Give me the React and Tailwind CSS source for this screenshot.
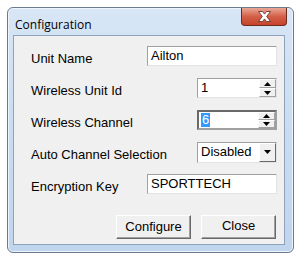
import React from "react";

const FONT = { fontFamily: '"Liberation Sans", Arial, sans-serif' };

// Flèches des boutons de défilement
const UpArrow = () => (
  <svg width="7" height="4" viewBox="0 0 7 4">
    <path d="M3.5 0L7 4H0z" fill="#000" />
  </svg>
);
const DownArrow = () => (
  <svg width="7" height="4" viewBox="0 0 7 4">
    <path d="M0 0h7L3.5 4z" fill="#000" />
  </svg>
);

const TextBox = ({ value, className = "" }) => (
  <div
    className={`h-[20px] bg-white border border-t-[#a0a0a0] border-l-[#a0a0a0] border-b-[#e3e3e3] border-r-[#e3e3e3] flex items-center pl-[3px] text-[13px] text-black ${className}`}
  >
    {value}
  </div>
);

const SpinHalf = ({ children }) => (
  <div className="flex-1 flex items-center justify-center bg-[#f0f0f0] border border-t-white border-l-white border-b-[#a0a0a0] border-r-[#a0a0a0]">
    {children}
  </div>
);

const Spinner = ({ value, focused }) => (
  <div
    className={`w-[80px] h-[20px] bg-white flex ${
      focused
        ? "border-2 border-t-[#696969] border-l-[#696969] border-b-[#a0a0a0] border-r-[#a0a0a0]"
        : "border border-t-[#a0a0a0] border-l-[#a0a0a0] border-b-[#e3e3e3] border-r-[#e3e3e3]"
    }`}
  >
    <div className="flex-1 flex items-center pl-[2px] text-[13px]">
      {focused ? (
        <span className="bg-[#3399ff] text-white px-[1px] leading-[14px]">{value}</span>
      ) : (
        <span className="pl-[1px]">{value}</span>
      )}
    </div>
    <div className="w-[17px] flex flex-col">
      <SpinHalf><UpArrow /></SpinHalf>
      <SpinHalf><DownArrow /></SpinHalf>
    </div>
  </div>
);

const Dropdown = ({ value }) => (
  <div className="w-[80px] h-[21px] bg-white flex border border-t-[#a0a0a0] border-l-[#a0a0a0] border-b-[#e3e3e3] border-r-[#e3e3e3]">
    <div className="flex-1 flex items-center pl-[3px] text-[13px]">{value}</div>
    <div className="w-[17px] flex items-center justify-center bg-[#f0f0f0] border border-t-white border-l-white border-b-[#696969] border-r-[#696969]">
      <DownArrow />
    </div>
  </div>
);

const Button = ({ label, textClass = "" }) => (
  <div className="w-[75px] h-[24px] flex items-center justify-center bg-[#f0f0f0] border border-t-white border-l-white border-b-[#696969] border-r-[#696969] shadow-[inset_-1px_-1px_0_#a0a0a0] text-[13px]">
    <span className={textClass}>{label}</span>
  </div>
);

const Row = ({ label, children }) => (
  <div className="h-[32px] flex items-center justify-between">
    <span className="pt-[5px]">{label}</span>
    {children}
  </div>
);

export default function App() {
  return (
    <div className="w-[302px] h-[257px] bg-white pl-[7px] pt-[7px]" style={FONT}>
      {/* Fenêtre */}
      <div className="w-[287px] h-[246px] rounded-[6px] border border-[#6b7a8c] bg-gradient-to-b from-[#d8e6f6] via-[#c9dcf1] to-[#c0d5ee] flex flex-col shadow-[inset_0_0_0_1px_#eef4fb]">
        {/* Barre de titre */}
        <div className="h-[27px] flex justify-between pl-[7px] pr-[6px]">
          <span className="text-[12px] text-black pt-[8px]" style={{ fontFamily: '"Open Sans", "Liberation Sans", sans-serif' }}>
            Configuration
          </span>
          <div className="w-[46px] h-[18px] rounded-b-[4px] border border-t-0 border-[#6f2a1e] bg-gradient-to-b from-[#e9a796] via-[#d35f48] to-[#c6432b] flex items-center justify-center">
            <svg width="15" height="11" viewBox="0 0 15 11">
              <path
                d="M1.5 0.5h4l2 2.6 2-2.6h4l-3.8 5 3.8 5h-4l-2-2.6-2 2.6h-4l3.8-5z"
                fill="#fff"
                stroke="#5a2a22"
                strokeWidth="0.8"
                strokeLinejoin="round"
              />
            </svg>
          </div>
        </div>

        {/* Zone cliente */}
        <div className="flex-1 ml-[5px] mr-[8px] mb-[7px] bg-[#f0f0f0] border border-[#8ea3bb] text-[13px] text-black pl-[17px] pr-[7px] pt-[4px] flex flex-col">
          <Row label="Unit Name">
            <TextBox value="Ailton" className="w-[130px]" />
          </Row>
          <Row label="Wireless Unit Id">
            <Spinner value="1" />
          </Row>
          <Row label="Wireless Channel">
            <Spinner value="6" focused />
          </Row>
          <Row label="Auto Channel Selection">
            <Dropdown value="Disabled" />
          </Row>
          <Row label="Encryption Key">
            <TextBox value="SPORTTECH" className="w-[130px]" />
          </Row>
          <div className="flex justify-end gap-[10px] mt-[15px] pr-[1px]">
            <Button label="Configure" />
            <Button label="Close" textClass="-mt-[2px]" />
          </div>
        </div>
      </div>
    </div>
  );
}
